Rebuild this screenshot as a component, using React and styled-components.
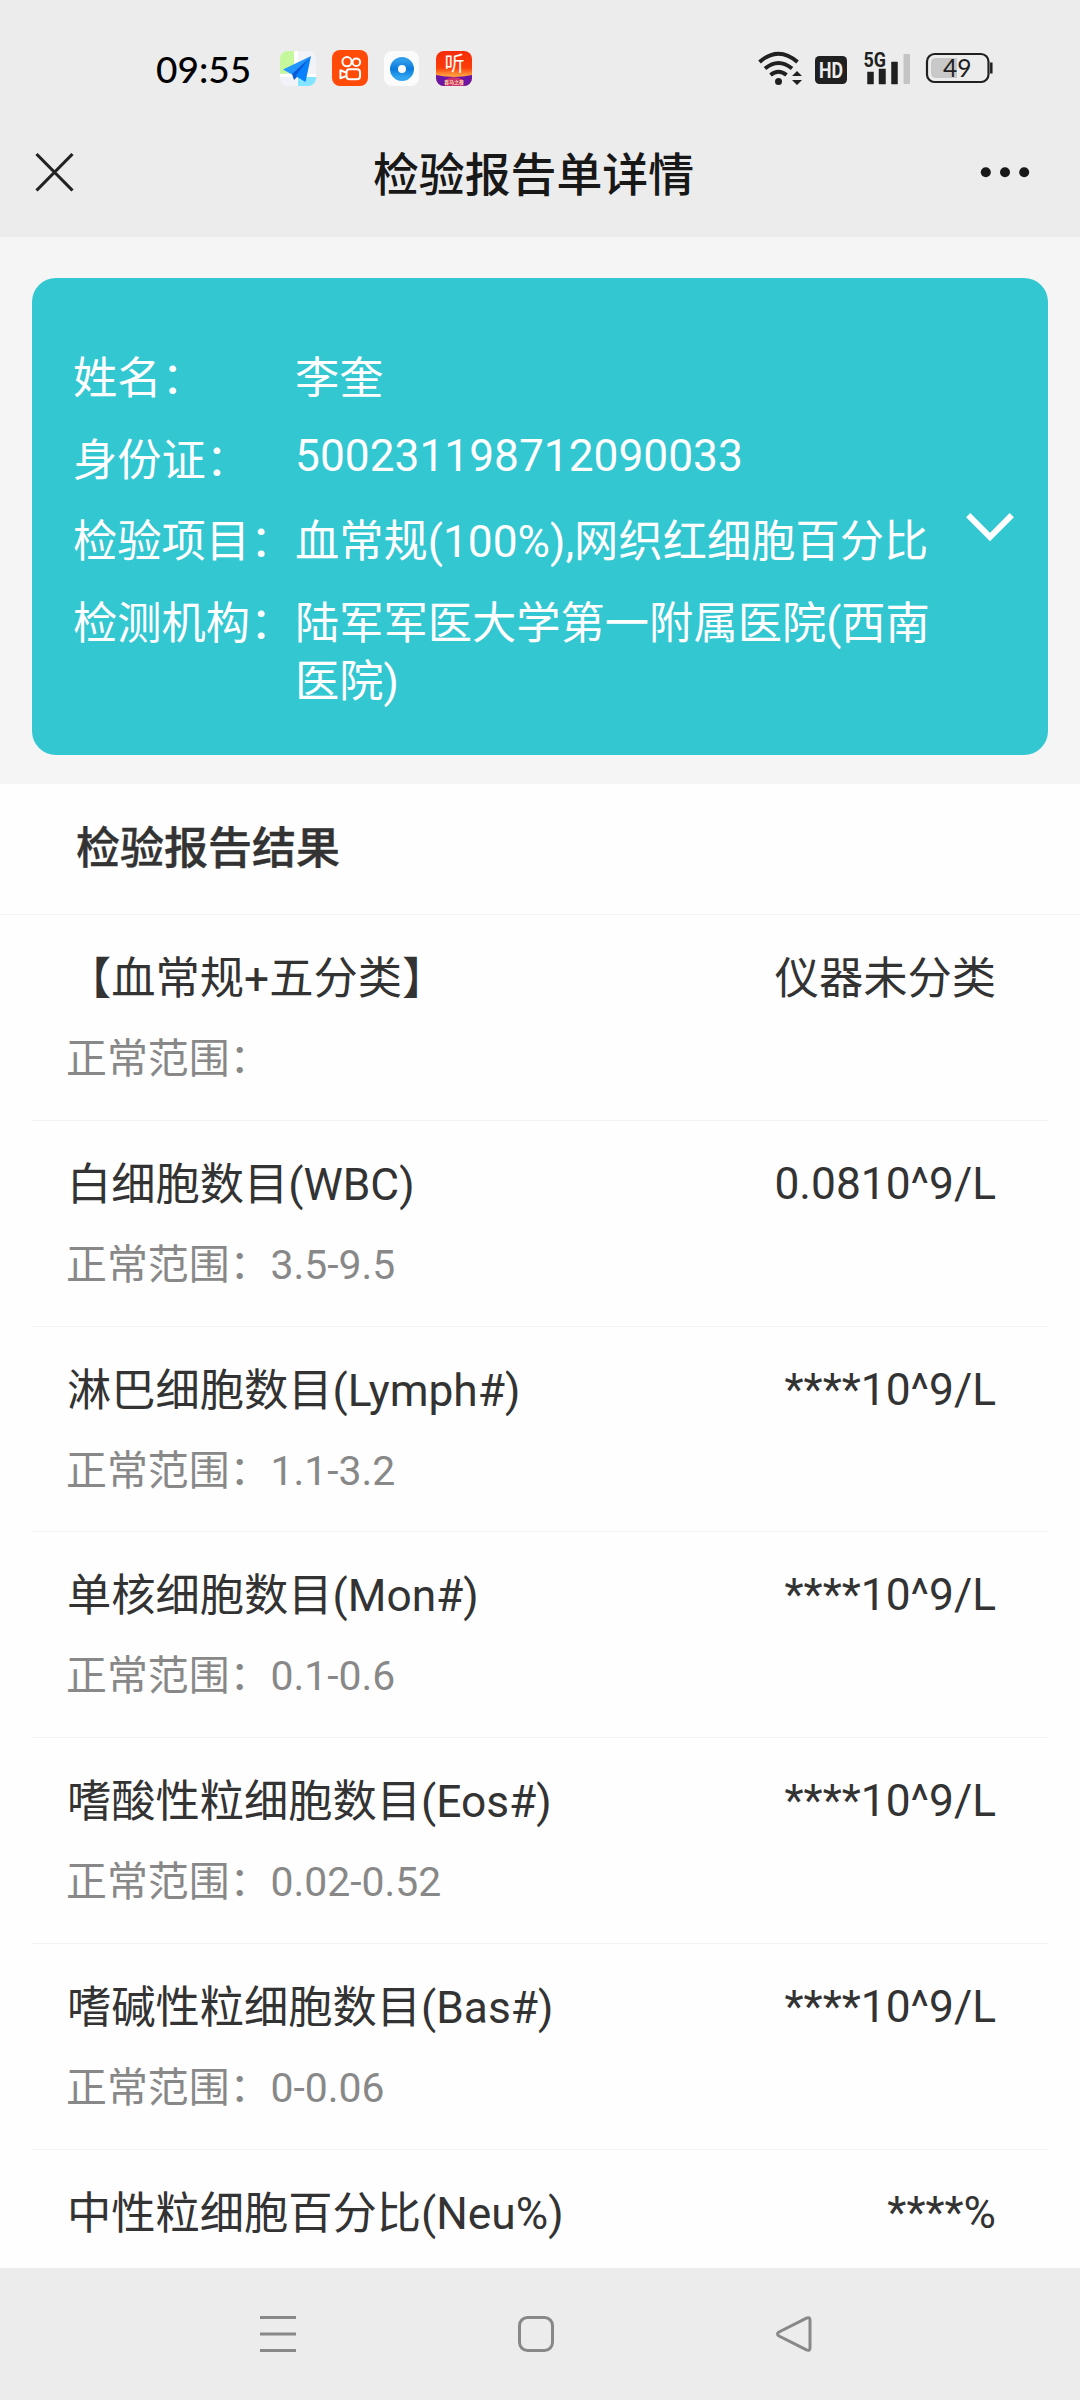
import styled, { createGlobalStyle } from 'styled-components';

const GlobalStyle = createGlobalStyle`
  * {
    box-sizing: border-box;
  }
  body {
    margin: 0;
    background: #fff;
    font-family: Roboto, "Noto Sans CJK SC", sans-serif;
    -webkit-font-smoothing: antialiased;
  }
`;

const Screen = styled.div`
  width: 1080px;
  height: 2400px;
  display: flex;
  flex-direction: column;
  overflow: hidden;
  background: #fefefe;
  color: #333;
`;

const StatusBar = styled.div`
  height: 120px;
  flex: none;
  display: flex;
  align-items: flex-start;
  justify-content: space-between;
  padding: 40px 86px 0 156px;
  background: #ececec;
`;

const StatusGroup = styled.div`
  display: flex;
  align-items: flex-start;
  padding-top: 10px;
`;

const Time = styled.span`
  width: 124px;
  font-family: Lato, sans-serif;
  font-size: 37px;
  font-weight: 500;
  line-height: 37px;
  color: #000;
  white-space: nowrap;
`;

const AppIcons = styled.div`
  display: flex;
  gap: 16px;
`;

const NavBar = styled.div`
  height: 117px;
  flex: none;
  display: flex;
  align-items: flex-start;
  justify-content: space-between;
  padding: 20px 47px 0 34px;
  background: #ececec;
`;

const NavTitle = styled.h1`
  margin: 3px 0 0;
  font-size: 45.9px;
  line-height: 64px;
  font-weight: 500;
  color: #181818;
`;

const NavIcon = styled.span`
  display: flex;
  width: 50px;
  height: 64px;
  align-items: center;

  svg {
    overflow: visible;
  }
`;

const CardWrap = styled.div`
  flex: none;
  height: 547px;
  padding: 41px 32px 0;
  background: #f5f5f5;
`;

const Card = styled.div`
  height: 477px;
  display: flex;
  justify-content: space-between;
  padding: 72px 33px 0 41px;
  border-radius: 24px;
  background: #32c7d1;
  color: #fff;
`;

const InfoList = styled.div`
  display: flex;
  flex-direction: column;
  gap: 23.7px;
`;

const InfoRow = styled.div`
  display: flex;
  height: ${(props) => (props.$wrap ? '116px' : '58px')};
  font-size: 44.28px;
  line-height: 58px;
`;

const InfoLabel = styled.span`
  width: 222px;
  flex: none;
  white-space: nowrap;
`;

const InfoValue = styled.span`
  width: 640px;
  line-height: ${(props) => (props.$latin ? '49px' : '58px')};
`;

const Chevron = styled.svg`
  margin-top: 161px;
`;

const SectionTitle = styled.h2`
  flex: none;
  height: 131px;
  margin: 0;
  padding: 35px 0 0 76px;
  border-bottom: 1px solid #f2f2f2;
  font-size: 44px;
  line-height: 61px;
  font-weight: 500;
  -webkit-text-stroke: 0.4px #333;
`;

const Results = styled.div`
  flex: 1;
  min-height: 0;
  overflow: hidden;
  padding: 0 32px;
`;

const Item = styled.div`
  height: 205.8px;
  padding: 34px 52px 0 35px;
  border-bottom: 1px solid #f2f2f2;
`;

const ItemTop = styled.div`
  display: flex;
  justify-content: space-between;
  height: 61px;
  font-size: 44.28px;
  line-height: 61px;
  white-space: nowrap;
`;

const ItemValue = styled.span`
  line-height: ${(props) => (props.$latin ? '59px' : '61px')};
`;

const Range = styled.div`
  margin: 21px 0 0 -1px;
  font-size: 40.9px;
  line-height: 56px;
  color: #888;
`;

const BottomBar = styled.div`
  flex: none;
  height: 132px;
  display: flex;
  justify-content: center;
  gap: 218px;
  padding: 46px 8px 0 0;
  background: #ececec;
`;

const info = [
  { label: '姓名：', value: '李奎' },
  { label: '身份证：', value: '500231198712090033', latin: true },
  { label: '检验项目：', value: '血常规(100%),网织红细胞百分比' },
  { label: '检测机构：', value: '陆军军医大学第一附属医院(西南医院)', wrap: true },
];

const results = [
  { name: '【血常规+五分类】', value: '仪器未分类', range: '' },
  { name: '白细胞数目(WBC)', value: '0.0810^9/L', range: '3.5-9.5', latin: true },
  { name: '淋巴细胞数目(Lymph#)', value: '****10^9/L', range: '1.1-3.2', latin: true },
  { name: '单核细胞数目(Mon#)', value: '****10^9/L', range: '0.1-0.6', latin: true },
  { name: '嗜酸性粒细胞数目(Eos#)', value: '****10^9/L', range: '0.02-0.52', latin: true },
  { name: '嗜碱性粒细胞数目(Bas#)', value: '****10^9/L', range: '0-0.06', latin: true },
  { name: '中性粒细胞百分比(Neu%)', value: '****%', range: null, latin: true },
];

function MapIcon() {
  return (
    <svg width="36" height="36" viewBox="0 0 36 36">
      <defs>
        <clipPath id="mapClip"><rect y="1" width="36" height="35" rx="8" /></clipPath>
      </defs>
      <g clipPath="url(#mapClip)">
        <rect width="36" height="36" fill="#f1f3f8" />
        <path d="M0 0h14v23L0 24z" fill="#c5f89d" />
        <path d="M14 0h4v12l-4 2zM0 24h36v3H0z" fill="#fff" />
        <path d="M18 27h18v9H18z" fill="#82e4ff" />
        <path d="M31 6L3 19.5l9 5z" fill="#2296ff" />
        <path d="M31 6L12 24l2 6 5-5z" fill="#0658d6" />
        <path d="M31 6L15.5 26l10 6z" fill="#0780fb" />
      </g>
    </svg>
  );
}

function KuaishouIcon() {
  return (
    <svg width="36" height="36" viewBox="0 0 36 36" fill="none" stroke="#fff" strokeWidth="2">
      <rect width="36" height="36" rx="8" fill="#ff4a08" stroke="none" />
      <circle cx="15" cy="11.7" r="4.6" />
      <circle cx="24.3" cy="12.2" r="3.8" />
      <rect x="14.5" y="19.2" width="13.5" height="10" rx="3" />
      <path d="M14 22.5l-5.6-2.2v8l5.6-2.2" strokeLinejoin="round" />
    </svg>
  );
}

function BrowserIcon() {
  return (
    <svg width="36" height="36" viewBox="0 0 36 36">
      <defs>
        <linearGradient id="ring" x1="0" y1="0" x2="0" y2="1">
          <stop offset="0" stopColor="#2e9bea" />
          <stop offset="0.5" stopColor="#0a79dc" />
          <stop offset="1" stopColor="#30a4f0" />
        </linearGradient>
      </defs>
      <rect y="1" width="35" height="35" rx="8" fill="#fbfbfb" />
      <circle cx="18" cy="19" r="8" fill="none" stroke="url(#ring)" strokeWidth="8" />
    </svg>
  );
}

function ListenIcon() {
  return (
    <svg width="36" height="36" viewBox="0 0 36 36">
      <defs>
        <clipPath id="listenClip"><rect y="1" width="36" height="35" rx="8" /></clipPath>
        <linearGradient id="listenBg" x1="0" y1="0" x2="0" y2="1">
          <stop offset="0" stopColor="#f52a08" />
          <stop offset="0.5" stopColor="#fb3d0a" />
          <stop offset="0.7" stopColor="#ff9c3c" />
        </linearGradient>
      </defs>
      <g clipPath="url(#listenClip)">
        <rect width="36" height="36" fill="url(#listenBg)" />
        <path d="M0 25q18 4 36 0v11H0z" fill="#6a15a5" />
        <path d="M9 30q9-6 18 0v6H9z" fill="#c8326e" />
        <text x="8.5" y="21" fontSize="20" fontWeight="400" fill="#fff">听</text>
        <text x="8" y="34" fontSize="5" fontWeight="700" fill="#ffd9a8">喜马之夜</text>
      </g>
    </svg>
  );
}

function SignalIcons() {
  return (
    <svg width="238" height="50" viewBox="756 40 238 50">
      <g fill="none" stroke="#202020" strokeWidth="4">
        <path d="M759.5 62q19-16.5 38 0" />
        <path d="M765 68.5q13.5-11 27 0" />
        <path d="M770.5 75q8-6.5 16 0" />
      </g>
      <circle cx="778.5" cy="81.5" r="3.5" fill="#202020" />
      <path d="M797 71l5 5h-10zM797 85l-5-5h10z" fill="#202020" />
      <rect x="815" y="56" width="32" height="28" rx="4.5" fill="#202020" />
      <text x="819" y="77.8" fontSize="21.5" fontWeight="700" fill="#ececec" textLength="24" lengthAdjust="spacingAndGlyphs">HD</text>
      <path d="M867.5 72h6v12h-6zM879 69h6.5v15H879zM891.5 62h6v22h-6z" fill="#202020" stroke="#202020" strokeLinejoin="round" strokeWidth="0.5" />
      <rect x="903.5" y="54" width="6.5" height="30" rx="1" fill="#c4c4c4" />
      <text x="863.5" y="67" fontSize="20.5" fontWeight="700" fill="#202020" textLength="22.5" lengthAdjust="spacingAndGlyphs">5G</text>
      <rect x="927" y="54" width="61.5" height="28" rx="7.5" fill="none" stroke="#202020" strokeWidth="2.2" />
      <path d="M957 58v20h-21q-5 0-5-5v-10q0-5 5-5z" fill="#c8c8c8" />
      <path d="M991.3 62.5v11" stroke="#202020" strokeWidth="2.5" />
      <text x="943" y="77" fontFamily="Lato" fontSize="24.5" fill="#202020">49</text>
    </svg>
  );
}

function App() {
  return (
    <Screen>
      <GlobalStyle />
      <StatusBar>
        <StatusGroup>
          <Time>09:55</Time>
          <AppIcons>
            <MapIcon />
            <KuaishouIcon />
            <BrowserIcon />
            <ListenIcon />
          </AppIcons>
        </StatusGroup>
        <SignalIcons />
      </StatusBar>
      <NavBar>
        <NavIcon>
          <svg width="42" height="42" viewBox="0 0 42 42" fill="none" stroke="#222" strokeWidth="3.2">
            <path d="M2.5 3l36 36.5M38.5 3l-36 36.5" />
          </svg>
        </NavIcon>
        <NavTitle>检验报告单详情</NavTitle>
        <NavIcon>
          <svg width="50" height="12" viewBox="0 0 50 12" fill="#181818">
            <circle cx="2.8" cy="6.3" r="5" />
            <circle cx="22" cy="6.3" r="5" />
            <circle cx="41.2" cy="6.3" r="5" />
          </svg>
        </NavIcon>
      </NavBar>
      <CardWrap>
        <Card>
          <InfoList>
            {info.map((row) => (
              <InfoRow key={row.label} $wrap={row.wrap}>
                <InfoLabel>{row.label}</InfoLabel>
                <InfoValue $latin={row.latin}>{row.value}</InfoValue>
              </InfoRow>
            ))}
          </InfoList>
          <Chevron width="50" height="34" viewBox="0 0 50 34" fill="none" stroke="#fff" strokeWidth="6">
            <path d="M3.2 4.2L25 26 46.8 4.2" />
          </Chevron>
        </Card>
      </CardWrap>
      <SectionTitle>检验报告结果</SectionTitle>
      <Results>
        {results.map((item) => (
          <Item key={item.name}>
            <ItemTop>
              <span>{item.name}</span>
              <ItemValue $latin={item.latin}>{item.value}</ItemValue>
            </ItemTop>
            {item.range !== null && <Range>正常范围：{item.range}</Range>}
          </Item>
        ))}
      </Results>
      <BottomBar>
        <svg width="40" height="40" viewBox="0 0 40 40" stroke="#888" strokeWidth="3">
          <path d="M2 3.5h36M2 20h36M2 36.5h36" />
        </svg>
        <svg width="40" height="40" viewBox="0 0 40 40" fill="none" stroke="#888" strokeWidth="3">
          <rect x="3.5" y="3.5" width="33" height="33" rx="8" />
        </svg>
        <svg width="40" height="40" viewBox="0 0 40 40" fill="none" stroke="#888" strokeWidth="3" strokeLinejoin="round">
          <path d="M32.5 4.1Q36 2.8 36 6v28Q36 37.2 32.5 35.9L5 22Q2 20 5 18z" />
        </svg>
      </BottomBar>
    </Screen>
  );
}

export default App;
